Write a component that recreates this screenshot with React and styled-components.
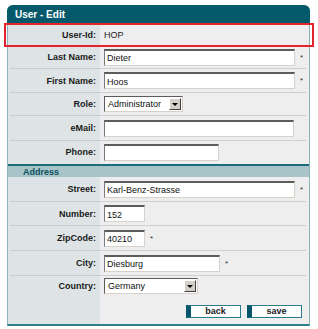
import React from "react";
import styled, { createGlobalStyle } from "styled-components";

const GlobalStyle = createGlobalStyle`
  body {
    margin: 0;
    background: #ffffff;
    font-family: "Liberation Sans", Arial, sans-serif;
  }
`;

const Card = styled.div`
  margin: 5px 0 0 7px;
  width: 301px;
  border-left: 1px solid #8db3ba;
  border-right: 1px solid #8db3ba;
  border-bottom: 2px solid #2e7f8b;
  border-radius: 6px 6px 0 0;
  background: linear-gradient(to right, #dee3e5 92px, #eeeeee 92px);
`;

const Header = styled.div`
  margin: 0 -1px;
  height: 19px;
  padding-left: 8px;
  display: flex;
  align-items: center;
  background: #04596a;
  border-radius: 6px 6px 0 0;
  color: #ffffff;
  font-size: 10px;
  font-weight: bold;
`;

const Row = styled.div`
  position: relative;
  display: grid;
  grid-template-columns: 92px 1fr;
  height: ${(p) => p.$h || 24}px;

  ${(p) =>
    p.$marked &&
    `
    &::after {
      content: "";
      position: absolute;
      top: -1px;
      bottom: -1px;
      left: -4px;
      right: -5px;
      border: 2px solid #e3242b;
      pointer-events: none;
    }
  `}
`;

const Label = styled.div`
  display: flex;
  align-items: center;
  justify-content: flex-end;
  padding-right: 4px;
  margin-left: 2px;
  border-bottom: 1px solid ${(p) => (p.$noLine ? "transparent" : "#c8cdd0")};
  font-size: 9px;
  font-weight: bold;
  color: #1a1a1a;
`;

const Value = styled.div`
  display: flex;
  align-items: center;
  padding-left: 4px;
  margin-right: 3px;
  border-bottom: 1px solid ${(p) => (p.$noLine ? "transparent" : "#cfcfcf")};
  font-size: 9px;
  color: #222;
`;

const Input = styled.input`
  box-sizing: border-box;
  width: ${(p) => p.$w}px;
  height: 17px;
  padding: 1px 2px 0;
  border: 1px solid #d6d2ca;
  border-top: 2px solid #5c5c5c;
  border-left: 1px solid #7a7a7a;
  background: #ffffff;
  font-family: "Liberation Sans", Arial, sans-serif;
  font-size: 9px;
  color: #111;
  outline: none;
`;

const Star = styled.span`
  margin-left: 5px;
  font-size: 8px;
  color: #333;
`;

const SelectBox = styled.div`
  box-sizing: border-box;
  width: ${(p) => p.$w}px;
  height: 16px;
  display: flex;
  align-items: center;
  justify-content: space-between;
  padding: 0 1px 0 3px;
  border: 1px solid #d6d2ca;
  border-top: 1px solid #5c5c5c;
  border-left: 1px solid #5c5c5c;
  background: #ffffff;
  font-size: 9px;
  color: #111;
`;

const Arrow = styled.span`
  box-sizing: border-box;
  width: 12px;
  height: 12px;
  display: flex;
  align-items: center;
  justify-content: center;
  background: #d4d0c8;
  border: 1px solid;
  border-color: #ffffff #404040 #404040 #ffffff;

  &::before {
    content: "";
    border-left: 3px solid transparent;
    border-right: 3px solid transparent;
    border-top: 3px solid #000;
  }
`;

const Section = styled.div`
  height: 11px;
  border-top: 2px solid #1c6b78;
  background: #a8c4c9;
  padding-left: 15px;
  display: flex;
  align-items: center;
  font-size: 9px;
  font-weight: bold;
  color: #0a4f5c;
`;

const Actions = styled.div`
  display: grid;
  grid-template-columns: 92px 1fr;
  height: 27px;
`;

const Buttons = styled.div`
  display: flex;
  justify-content: flex-end;
  align-items: flex-start;
  gap: 6px;
  padding: 8px 7px 0 0;
`;

const Button = styled.button`
  box-sizing: border-box;
  width: 55px;
  height: 13px;
  padding: 0;
  border: 1px solid #2b7c89;
  border-left: 5px solid #05566a;
  background: #ffffff;
  font-family: "Liberation Sans", Arial, sans-serif;
  font-size: 9px;
  font-weight: bold;
  color: #222;
  line-height: 11px;
`;

const Field = ({ label, h, marked, noLine, children }) => (
  <Row $h={h} $marked={marked}>
    <Label $noLine={noLine}>{label}</Label>
    <Value $noLine={noLine}>{children}</Value>
  </Row>
);

const App = () => {
  return (
    <>
      <GlobalStyle />
      <Card>
        <Header>User - Edit</Header>
        <Field label="User-Id:" h={22} marked>
          HOP
        </Field>
        <Field label="Last Name:" h={23}>
          <Input $w={191} defaultValue="Dieter" />
          <Star>*</Star>
        </Field>
        <Field label="First Name:" h={24}>
          <Input $w={191} defaultValue="Hoos" />
          <Star>*</Star>
        </Field>
        <Field label="Role:" h={23}>
          <SelectBox $w={79}>
            Administrator
            <Arrow />
          </SelectBox>
        </Field>
        <Field label="eMail:" h={25}>
          <Input $w={190} defaultValue="" />
        </Field>
        <Field label="Phone:" h={23} noLine>
          <Input $w={115} defaultValue="" />
        </Field>
        <Section>Address</Section>
        <Field label="Street:" h={25}>
          <Input $w={191} defaultValue="Karl-Benz-Strasse" />
          <Star>*</Star>
        </Field>
        <Field label="Number:" h={24}>
          <Input $w={41} defaultValue="152" />
        </Field>
        <Field label="ZipCode:" h={25}>
          <Input $w={41} defaultValue="40210" />
          <Star>*</Star>
        </Field>
        <Field label="City:" h={25}>
          <Input $w={116} defaultValue="Diesburg" />
          <Star>*</Star>
        </Field>
        <Field label="Country:" h={21} noLine>
          <SelectBox $w={94}>
            Germany
            <Arrow />
          </SelectBox>
        </Field>
        <Actions>
          <div />
          <Buttons>
            <Button>back</Button>
            <Button>save</Button>
          </Buttons>
        </Actions>
      </Card>
    </>
  );
};

export default App;
